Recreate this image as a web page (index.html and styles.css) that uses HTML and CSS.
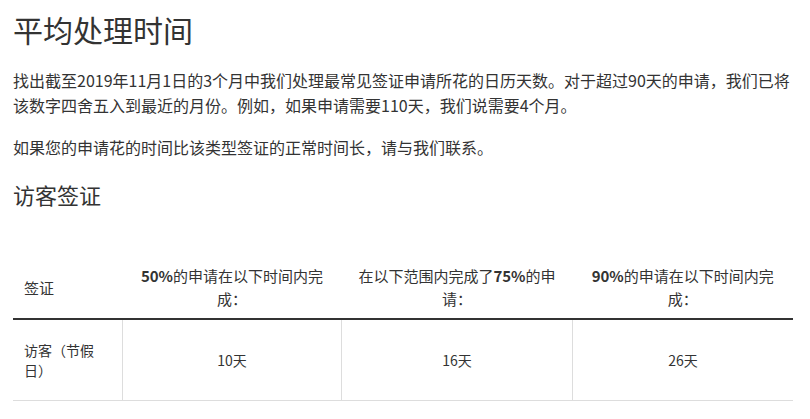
FILE: index.html
```html
<!DOCTYPE html>
<html lang="zh-CN">
<head>
<meta charset="utf-8">
<title>平均处理时间</title>
<link rel="stylesheet" href="styles.css">
</head>
<body>
<main class="page">
  <h1 class="title">平均处理时间</h1>
  <p class="para">找出截至2019年11月1日的3个月中我们处理最常见签证申请所花的日历天数。对于超过90天的申请，我们已将该数字四舍五入到最近的月份。例如，如果申请需要110天，我们说需要4个月。</p>
  <p class="para">如果您的申请花的时间比该类型签证的正常时间长，请与我们联系。</p>
  <h2 class="subtitle">访客签证</h2>
  <table class="times">
    <thead>
      <tr>
        <th class="col-visa">签证</th>
        <th class="col-num"><b>50%</b>的申请在以下时间内完成：</th>
        <th class="col-num">在以下范围内完成了<b>75%</b>的申请：</th>
        <th class="col-num"><b>90%</b>的申请在以下时间内完成：</th>
      </tr>
    </thead>
    <tbody>
      <tr>
        <td class="col-visa">访客（节假日）</td>
        <td class="col-num">10天</td>
        <td class="col-num">16天</td>
        <td class="col-num">26天</td>
      </tr>
    </tbody>
  </table>
</main>
</body>
</html>
```
FILE: styles.css
```css
html, body {
  margin: 0;
  padding: 0;
  background: #ffffff;
}
body {
  font-family: "Noto Sans CJK SC", "Noto Sans", sans-serif;
  color: #333333;
}
.page {
  padding: 0 13px;
}
.title {
  margin: 0;
  padding-top: 10px;
  font-size: 30px;
  line-height: 38px;
  font-weight: 400;
  color: #333;
}
.para {
  margin: 0;
  padding-top: 20px;
  font-size: 16px;
  line-height: 25px;
}
.para + .para {
  padding-top: 17px;
}
.subtitle {
  margin: 0;
  padding-top: 18px;
  font-size: 22px;
  line-height: 32px;
  font-weight: 400;
}
.times {
  margin-top: 46px;
  width: 780px;
  border-collapse: collapse;
  font-size: 15px;
  line-height: 23px;
}
.times th {
  font-weight: 400;
  padding: 8px 10px 8px;
  vertical-align: middle;
  border-bottom: 2px solid #333;
}
.times th b {
  font-weight: 700;
}
.times td {
  height: 80px;
  padding: 0 10px;
  font-size: 14px;
  line-height: 20px;
  border-bottom: 1px solid #dddddd;
  border-left: 1px solid #dddddd;
}
.times td:first-child {
  border-left: none;
}
.times .col-visa {
  text-align: left;
  width: 88px;
  padding-left: 11px;
}
.times .col-num {
  text-align: center;
}
.times th:nth-child(2) { width: 199px; }
.times th:nth-child(3) { width: 211px; }
```
